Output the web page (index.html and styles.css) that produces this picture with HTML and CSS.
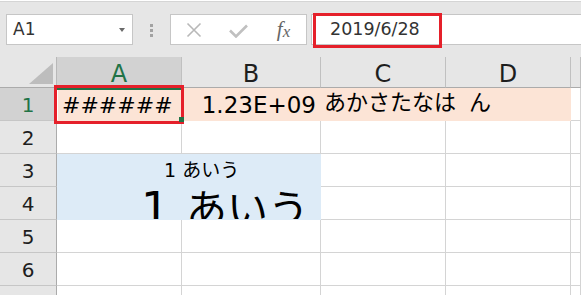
FILE: index.html
```html
<!DOCTYPE html>
<html lang="ja">
<head>
<meta charset="utf-8">
<title>Sheet</title>
<link rel="stylesheet" href="styles.css">
</head>
<body>
<div class="app">
  <header class="fbar">
    <div class="namebox"><span class="ref">A1</span><span class="caret"></span></div>
    <div class="grip"><i></i><i></i><i></i></div>
    <div class="fbtns">
      <div class="btn">
        <svg class="ico" width="16" height="16" viewBox="0 0 16 16"><path d="M1.5 1.5 L14.5 14.5 M14.5 1.5 L1.5 14.5" stroke="#b8b8b8" stroke-width="1.6" fill="none"/></svg>
      </div>
      <div class="btn btn-ok">
        <svg class="ico" width="19" height="14" viewBox="0 0 19 14"><path d="M1 6.5 L7 12.5 L18 1.5" stroke="#c0c0c0" stroke-width="2.6" fill="none"/></svg>
      </div>
      <div class="btn"><span class="fx">f<span class="fx-x">x</span></span></div>
    </div>
    <div class="finput">2019/6/28</div>
  </header>

  <div class="sheet">
    <div class="corner"><svg width="56" height="30" viewBox="0 0 56 30"><polygon points="29,27 53,27 53,6" fill="#bdbdbd"/></svg></div>
    <div class="ch sel">A</div>
    <div class="ch">B</div>
    <div class="ch">C</div>
    <div class="ch">D</div>
    <div class="ch"></div>

    <div class="rh sel">1</div>
    <div class="cell pink a1">######</div>
    <div class="cell pink num">1.23E+09</div>
    <div class="cell pink txt span2">あかさたなは ん</div>
    <div class="cell"></div>

    <div class="rh">2</div>
    <div class="cell"></div><div class="cell"></div><div class="cell"></div><div class="cell"></div><div class="cell"></div>

    <div class="rh">3</div>
    <div class="merged">
      <div class="m-sm">1 あいう</div>
      <div class="m-lg">1 <span class="kana-lg">あいう</span></div>
    </div>
    <div class="cell"></div><div class="cell"></div><div class="cell"></div>

    <div class="rh">4</div>
    <div class="cell"></div><div class="cell"></div><div class="cell"></div>

    <div class="rh">5</div>
    <div class="cell"></div><div class="cell"></div><div class="cell"></div><div class="cell"></div><div class="cell"></div>

    <div class="rh">6</div>
    <div class="cell"></div><div class="cell"></div><div class="cell"></div><div class="cell"></div><div class="cell"></div>

    <div class="rh">7</div>
    <div class="cell"></div><div class="cell"></div><div class="cell"></div><div class="cell"></div><div class="cell"></div>
  </div>

  <div class="mark mark-formula"></div>
  <div class="mark mark-cell"><span class="handle"></span></div>
</div>
</body>
</html>
```

FILE: styles.css
```css
html, body {
  margin: 0;
  padding: 0;
  background: #ffffff;
}

body {
  font-family: "DejaVu Sans", "Noto Sans CJK JP", sans-serif;
  color: #000;
}

.app {
  position: relative;
  width: 581px;
  height: 295px;
  overflow: hidden;
}

/* ---------- formula bar ---------- */
.fbar {
  display: flex;
  align-items: flex-start;
  box-sizing: border-box;
  height: 56px;
  margin-top: 1px;
  border-top: 1px solid #d5d5d5;
  background: #e6e6e6;
  padding: 12px 0 0 6px;
}

.namebox {
  width: 127px;
  height: 31px;
  box-sizing: border-box;
  border: 1px solid #c6c6c6;
  background: #fff;
  display: flex;
  align-items: center;
  padding: 0 7px 0 6px;
}

.ref {
  font-size: 17px;
  line-height: 29px;
  color: #333;
}

.caret {
  margin-left: auto;
  width: 0;
  height: 0;
  border-left: 3.5px solid transparent;
  border-right: 3.5px solid transparent;
  border-top: 4px solid #6a6a6a;
}

.grip {
  width: 37px;
  height: 31px;
  box-sizing: border-box;
  padding-top: 10px;
  display: flex;
  flex-direction: column;
  align-items: center;
  gap: 2px;
}

.grip i {
  display: block;
  width: 3px;
  height: 3px;
  background: #a2a2a2;
}

.fbtns {
  width: 137px;
  height: 31px;
  box-sizing: border-box;
  border: 1px solid #c6c6c6;
  background: #fff;
  display: flex;
}

.btn {
  width: 45px;
  display: flex;
  align-items: center;
  justify-content: center;
}

.btn-ok {
  padding-top: 2px;
  box-sizing: border-box;
}

.ico {
  display: block;
}

.fx {
  font-family: "Liberation Serif", serif;
  font-style: italic;
  font-size: 21px;
  line-height: 22px;
  color: #666666;
}

.fx-x {
  font-size: 17px;
  position: relative;
  top: 1px;
}

.finput {
  flex: 1;
  margin-left: 4px;
  height: 31px;
  box-sizing: border-box;
  border: 1px solid #c6c6c6;
  border-right: none;
  background: #fff;
  padding-left: 18px;
  font-size: 17.5px;
  line-height: 29px;
  color: #333;
}

/* ---------- sheet ---------- */
.sheet {
  display: grid;
  grid-template-columns: 57px 125px 139px 125px 125px 10px;
  grid-template-rows: 31px repeat(7, 33px);
}

.corner {
  box-sizing: border-box;
  background: #e6e6e6;
  border-right: 1px solid #b8b8b8;
  border-bottom: 1px solid #ababab;
}

.corner svg {
  display: block;
}

.ch {
  box-sizing: border-box;
  background: #e6e6e6;
  border-right: 1px solid #c0c0c0;
  border-bottom: 1px solid #ababab;
  text-align: center;
  font-size: 24px;
  line-height: 34px;
  color: #1e1e1e;
  overflow: hidden;
}

.rh {
  box-sizing: border-box;
  background: #e6e6e6;
  border-right: 1px solid #ababab;
  border-bottom: 1px solid #c6c6c6;
  text-align: center;
  font-size: 20px;
  line-height: 35px;
  color: #1e1e1e;
  overflow: hidden;
}

.ch.sel,
.rh.sel {
  background: #d2d2d2;
  color: #217346;
}

.cell {
  box-sizing: border-box;
  border-right: 1px solid #d4d4d4;
  border-bottom: 1px solid #d4d4d4;
  white-space: nowrap;
  overflow: hidden;
}

.pink {
  background: #fce4d6;
  border-color: #fce4d6;
}

.a1 {
  font-size: 22px;
  line-height: 35px;
  padding-left: 5px;
  box-shadow: inset 0 2px 0 #217346, inset 1px 0 0 #ffffff;
}

.num {
  font-size: 23px;
  line-height: 35px;
  text-align: right;
  padding-right: 4px;
}

.txt {
  font-size: 22px;
  line-height: 29px;
  padding-left: 3px;
  word-spacing: 6px;
}

.span2 {
  grid-column: span 2;
}

.merged {
  grid-column: span 2;
  grid-row: span 2;
  box-sizing: border-box;
  background: #ddebf7;
  border-right: 1px solid #ddebf7;
  border-bottom: 1px solid #ddebf7;
  overflow: hidden;
  white-space: nowrap;
}

.m-sm {
  height: 33px;
  font-size: 19px;
  line-height: 33px;
  padding-left: 107px;
}

.m-lg {
  height: 33px;
  padding-top: 5px;
  font-size: 45px;
  line-height: 33px;
  padding-left: 84px;
}

.kana-lg {
  font-size: 41px;
  margin-left: 2px;
}

/* ---------- annotation marks ---------- */
.mark {
  position: absolute;
  box-sizing: border-box;
  border: 3px solid #e5202a;
}

.mark-formula {
  left: 313px;
  top: 13px;
  width: 129px;
  height: 35px;
}

.mark-cell {
  left: 54px;
  top: 85px;
  width: 130px;
  height: 39px;
}

.handle {
  position: absolute;
  left: 122px;
  top: 29px;
  width: 5px;
  height: 5px;
  background: #217346;
}
```
